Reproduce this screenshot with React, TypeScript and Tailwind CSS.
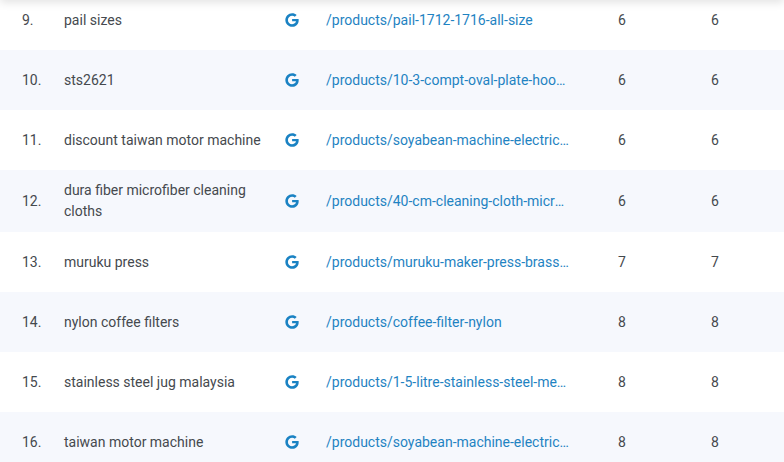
import { FaGoogle } from "react-icons/fa";

const rows = [
  ["9.", "pail sizes", "/products/pail-1712-1716-all-size", "6", "6"],
  ["10.", "sts2621", "/products/10-3-compt-oval-plate-hook-stain", "6", "6"],
  ["11.", "discount taiwan motor machine", "/products/soyabean-machine-electric-taiwan", "6", "6"],
  ["12.", "dura fiber microfiber cleaning cloths", "/products/40-cm-cleaning-cloth-microfiber", "6", "6"],
  ["13.", "muruku press", "/products/muruku-maker-press-brass-heavy", "7", "7"],
  ["14.", "nylon coffee filters", "/products/coffee-filter-nylon", "8", "8"],
  ["15.", "stainless steel jug malaysia", "/products/1-5-litre-stainless-steel-measuring", "8", "8"],
  ["16.", "taiwan motor machine", "/products/soyabean-machine-electric-taiwan", "8", "8"],
];

export default function App() {
  return (
    <div className="relative h-[462px] w-[784px] overflow-hidden bg-white font-['Roboto',sans-serif] text-[14px] leading-[21px] text-[#45494e]">
      <div className="absolute inset-x-0 top-[-10px] h-[10px] shadow-[0_2px_10px_rgba(0,0,0,0.13)]" />
      <div className="-mt-[10px] flex flex-col">
        {rows.map((r, i) => (
          <div
            key={r[0]}
            className={`flex min-h-[60px] items-center py-[10px] ${i % 2 === 1 ? "bg-[#f6f8fd]" : "bg-white"}`}
          >
            <div className="w-[64px] shrink-0 pl-[22px]">{r[0]}</div>
            <div className="w-[221px] shrink-0 pr-[20px]">{r[1]}</div>
            <div className="w-[41px] shrink-0">
              <FaGoogle className="h-[14px] w-[14px] text-[#1a82c3]" />
            </div>
            <div className="w-[292px] shrink-0 pr-[48px]">
              <div className="truncate text-[#1f83c2]">{r[2]}</div>
            </div>
            <div className="w-[93px] shrink-0">{r[3]}</div>
            <div>{r[4]}</div>
          </div>
        ))}
      </div>
    </div>
  );
}
